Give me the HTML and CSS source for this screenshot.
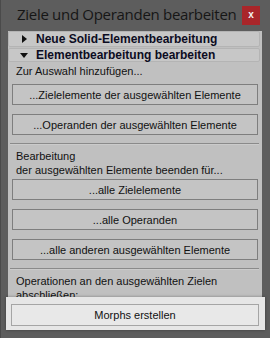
FILE: index.html
```html
<!DOCTYPE html>
<html lang="de">

<head>
  <meta charset="UTF-8">
  <title>Ziele und Operanden bearbeiten</title>
  <link rel="stylesheet" href="styles.css">
</head>

<body>
  <div class="window">
    <div class="titlebar">
      <span class="title">Ziele und Operanden bearbeiten</span>
      <span class="close">x</span>
    </div>

    <div class="panel">
      <div class="scroll">
        <div class="rollout">
          <span class="arrow right"></span>
          <span>Neue Solid-Elementbearbeitung</span>
        </div>
        <div class="rollout">
          <span class="arrow down"></span>
          <span>Elementbearbeitung bearbeiten</span>
        </div>

        <p class="label first">Zur Auswahl hinzufügen...</p>
        <button class="btn">...Zielelemente der ausgewählten Elemente</button>
        <button class="btn">...Operanden der ausgewählten Elemente</button>

        <div class="separator"></div>

        <p class="label">Bearbeitung<br>der ausgewählten Elemente beenden für...</p>
        <button class="btn">...alle Zielelemente</button>
        <button class="btn">...alle Operanden</button>
        <button class="btn">...alle anderen ausgewählten Elemente</button>

        <div class="separator"></div>

        <p class="label">Operationen an den ausgewählten Zielen<br>abschließen:</p>
      </div>

      <div class="footer">
        <button class="btn light">Morphs erstellen</button>
      </div>
    </div>
  </div>
</body>

</html>
```

FILE: styles.css
```css
body {
  margin: 0;
  background-color: #5b5b5b;
  font-family: "Liberation Sans", Arial, sans-serif;
  font-size: 11px;
  color: #111;
}

.window {
  width: 270px;
  height: 338px;
  box-sizing: border-box;
  padding: 0 8px 8px 8px;
  background-color: #5d5d5d;
  border-left: 1px solid #4a4a4a;
  display: flex;
  flex-direction: column;
}

.titlebar {
  height: 31px;
  display: flex;
  align-items: flex-start;
  justify-content: space-between;
  margin-left: -1px;
}

.title {
  flex: 1;
  min-width: 0;
  white-space: nowrap;
  font-family: "Open Sans", sans-serif;
  font-size: 15px;
  letter-spacing: -0.3px;
  color: #161616;
  margin: 4px 0 0 9px;
}

.close {
  flex: none;
  width: 18px;
  height: 19px;
  margin: 6px 2px 0 0;
  background-color: #a9262a;
  color: #f2f2f2;
  font-weight: bold;
  font-size: 10px;
  line-height: 18px;
  text-align: center;
}

.panel {
  flex: 1;
  display: flex;
  flex-direction: column;
  background-color: #c0c0c0;
  margin-left: -1px;
}

.scroll {
  height: 266px;
  overflow: hidden;
}

.rollout {
  height: 15px;
  margin: 0 2px 1px 0;
  border: 1px solid #b4b4b4;
  border-radius: 2px;
  background-color: #c7c7c7;
  display: flex;
  align-items: center;
  font-weight: bold;
  font-size: 12px;
  color: #0c0c22;
  box-sizing: border-box;
}

.rollout:first-child {
  height: 16px;
}

.rollout + .rollout {
  height: 14px;
}

.arrow {
  width: 0;
  height: 0;
  margin: 0 8px 0 11px;
}

.arrow.right {
  border-top: 4px solid transparent;
  border-bottom: 4px solid transparent;
  border-left: 5px solid #111;
  margin-right: 9px;
  margin-left: 13px;
}

.arrow.down {
  border-left: 4px solid transparent;
  border-right: 4px solid transparent;
  border-top: 5px solid #111;
}

.label {
  margin: 0 0 2px 0;
  padding: 0 0 0 8px;
  line-height: 14px;
}

.label.first {
  padding-top: 1px;
  margin-bottom: 6px;
}

.btn {
  display: block;
  box-sizing: border-box;
  width: 246px;
  height: 21px;
  margin: 0 0 9px 4px;
  padding: 0;
  background-color: #c4c4c4;
  border: 1px solid #7e7e7e;
  border-radius: 0;
  font-family: "Liberation Sans", Arial, sans-serif;
  font-size: 11px;
  color: #111;
}

.separator {
  height: 0;
  margin: -1px 3px 4px 2px;
  border-top: 1px solid #8a8a8a;
  border-bottom: 1px solid #cbcbcb;
}

.footer {
  height: 33px;
  margin: 0 -3px 0 -2px;
  padding: 7px 0 0 5px;
  box-sizing: border-box;
  background-color: #e6e6e6;
  box-shadow: 0 0 3px rgba(0, 0, 0, 0.35);
  position: relative;
}

.btn.light {
  width: 248px;
  height: 22px;
  margin: 0;
  background-color: #e8e8e8;
  border-color: #a5a5a5;
}
```
